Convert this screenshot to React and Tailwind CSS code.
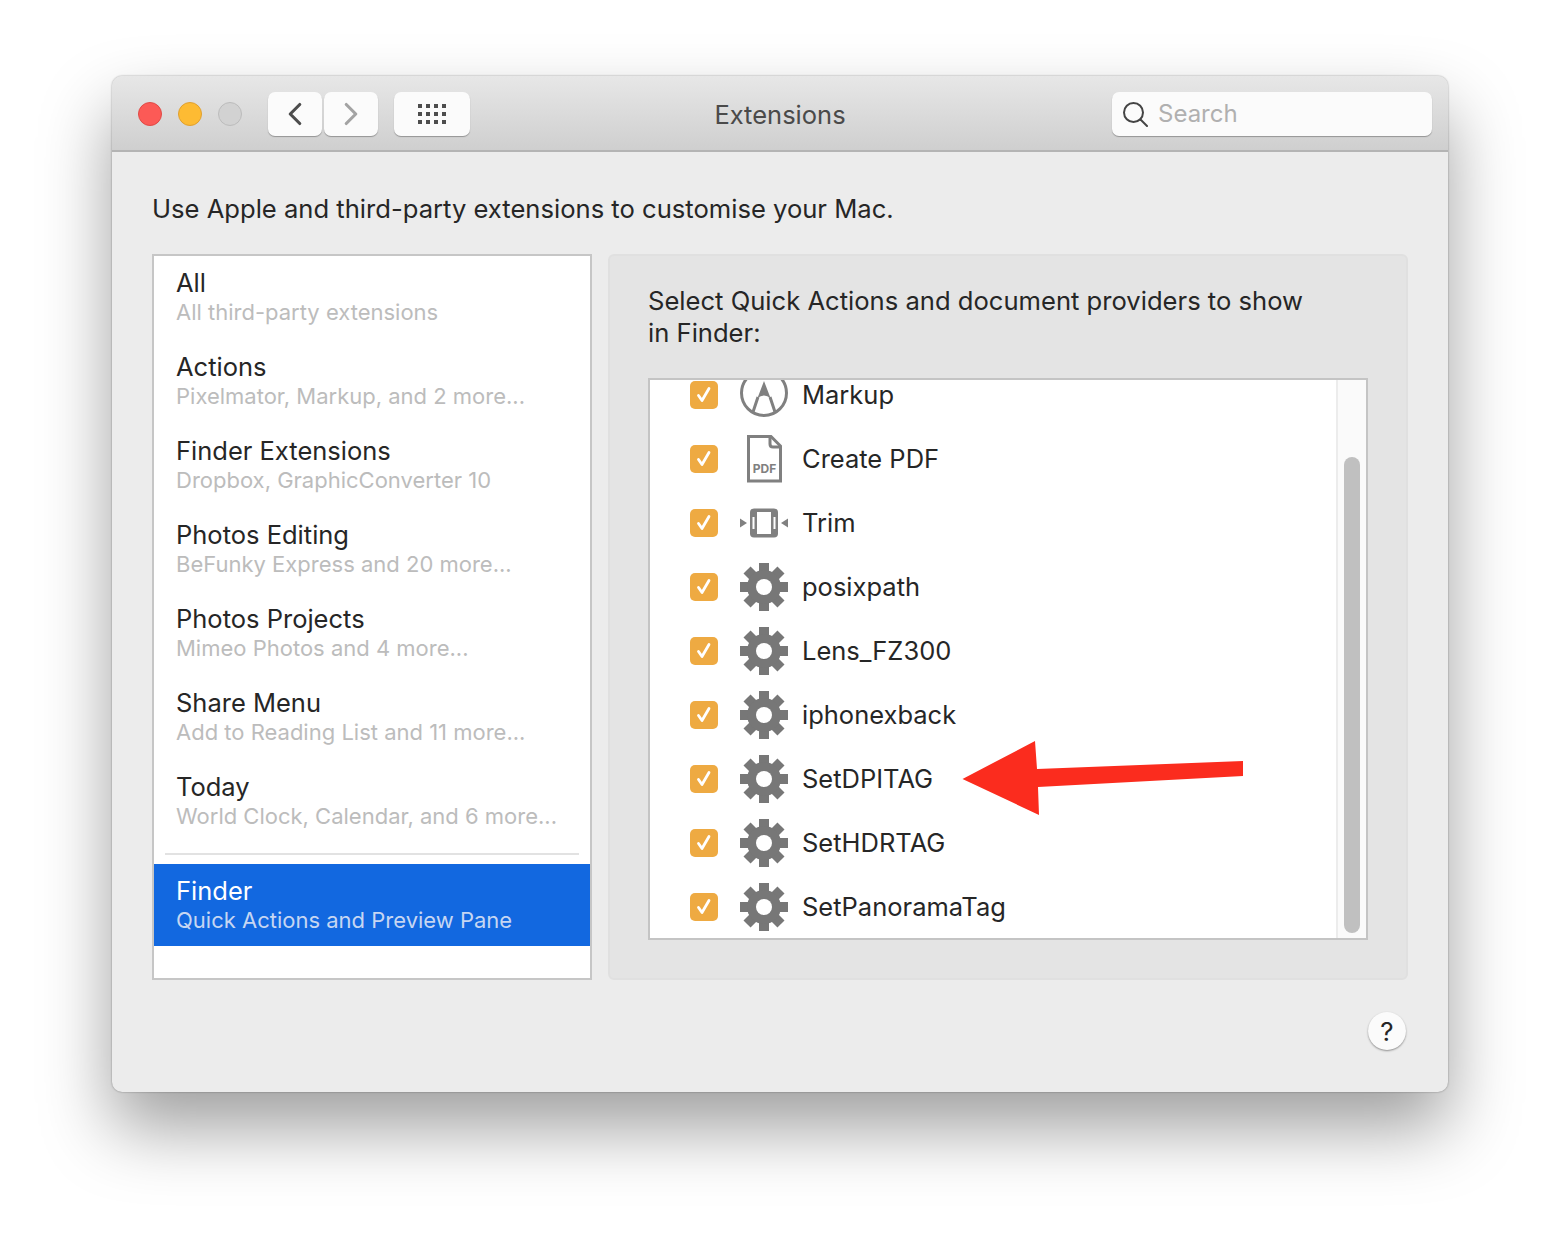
import { ChevronLeft, ChevronRight } from "lucide-react";

const categories = [
  { title: "All", sub: "All third-party extensions" },
  { title: "Actions", sub: "Pixelmator, Markup, and 2 more..." },
  { title: "Finder Extensions", sub: "Dropbox, GraphicConverter 10" },
  { title: "Photos Editing", sub: "BeFunky Express and 20 more..." },
  { title: "Photos Projects", sub: "Mimeo Photos and 4 more..." },
  { title: "Share Menu", sub: "Add to Reading List and 11 more..." },
  { title: "Today", sub: "World Clock, Calendar, and 6 more..." },
];

const actions = [
  { name: "Markup", icon: "markup" },
  { name: "Create PDF", icon: "pdf" },
  { name: "Trim", icon: "trim" },
  { name: "posixpath", icon: "gear" },
  { name: "Lens_FZ300", icon: "gear" },
  { name: "iphonexback", icon: "gear" },
  { name: "SetDPITAG", icon: "gear" },
  { name: "SetHDRTAG", icon: "gear" },
  { name: "SetPanoramaTag", icon: "gear" },
];

const GearIcon = () => (
  <svg width="48" height="48" viewBox="0 0 48 48" fill="#777777">
    {[0, 45, 90, 135].map((a) => (
      <rect key={a} x="19" y="0" width="10" height="48" transform={`rotate(${a} 24 24)`} />
    ))}
    <circle cx="24" cy="24" r="17" />
    <circle cx="24" cy="24" r="8" fill="#ffffff" />
  </svg>
);

const MarkupIcon = () => (
  <svg width="48" height="48" viewBox="0 0 48 48" fill="none" stroke="#808080">
    <circle cx="24" cy="22" r="22.5" strokeWidth="3" />
    <path d="M24 10 L17.5 27 Q24 22 30.5 27 Z" fill="#808080" stroke="none" />
    <path d="M18 26 L13 41 M30 26 L35 41" strokeWidth="3" />
  </svg>
);

const PdfIcon = () => (
  <svg width="48" height="48" viewBox="0 0 48 48" fill="none" stroke="#808080" strokeWidth="3">
    <path d="M8.5 1.5 H31 L40.5 11 V46 H8.5 Z" />
    <path d="M30 1.5 V9 Q30 12 33 12 H40.5" />
    <text x="24.5" y="37.5" textAnchor="middle" fill="#808080" stroke="none" fontSize="12" fontWeight="700" fontFamily="Inter, sans-serif">PDF</text>
  </svg>
);

const TrimIcon = () => (
  <svg width="48" height="48" viewBox="0 0 48 48" fill="#808080">
    <path d="M0 19.5 L7 24 L0 28.5 Z" />
    <path d="M48 19.5 L41 24 L48 28.5 Z" />
    <rect x="10" y="9.5" width="28" height="29" rx="4" />
    <rect x="17" y="13" width="14" height="22" fill="#ffffff" />
    <rect x="12.5" y="18" width="2" height="12" fill="#ffffff" />
    <rect x="33.5" y="18" width="2" height="12" fill="#ffffff" />
  </svg>
);

const icons = { gear: GearIcon, markup: MarkupIcon, pdf: PdfIcon, trim: TrimIcon };

const ActionRow = ({ name, icon }) => {
  const Icon = icons[icon];
  return (
    <div className="flex h-16 items-center pl-[40px]">
      <div className="mb-[1px] flex h-7 w-7 items-center justify-center rounded-[5px] bg-[#eeaa42]">
        <svg width="20" height="20" viewBox="0 0 20 20" fill="none" stroke="#ffffff" strokeWidth="2.8" strokeLinecap="round" strokeLinejoin="round">
          <path d="M4.5 10.5 L8 15.5 L15 3.5" />
        </svg>
      </div>
      <div className="mb-[1px] ml-[22px] h-12 w-12">
        <Icon />
      </div>
      <span className="ml-[14px] text-[25.5px] text-[#262626]">{name}</span>
    </div>
  );
};

const CategoryRow = ({ title, sub }) => (
  <div className="flex h-[84px] flex-col pl-[22px] pt-[11px]">
    <span className="text-[25.5px] leading-[32px] text-[#262626]">{title}</span>
    <span className="mt-[-2px] text-[22px] leading-[30px] text-[#bcbcbc]">{sub}</span>
  </div>
);

export default function App() {
  return (
    <div className="h-[1240px] bg-white pl-[112px] pt-[76px] font-['Inter',sans-serif]">
      <div className="relative h-[1016px] w-[1336px] overflow-visible rounded-[10px] bg-[#ececec] shadow-[0_36px_70px_rgba(0,0,0,0.38),0_0_2px_rgba(0,0,0,0.4)]">
        {/* title bar */}
        <div className="flex h-[76px] items-center rounded-t-[10px] border-b-2 border-[#b4b4b4] bg-gradient-to-b from-[#e7e7e7] to-[#cfcfcf] pl-[26px] pt-[2px]">
          <div className="h-6 w-6 rounded-full border border-[#e04a46] bg-[#fc5a56]" />
          <div className="ml-4 h-6 w-6 rounded-full border border-[#e0a030] bg-[#fdbb33]" />
          <div className="ml-4 h-6 w-6 rounded-full border border-[#bcbcbc] bg-[#d2d2d2]" />
          <div className="ml-[26px] flex h-[44px] w-[54px] items-center justify-center rounded-[7px] bg-[#fbfbfb] shadow-[0_1px_1px_rgba(0,0,0,0.3)]">
            <ChevronLeft size={38} strokeWidth={2} color="#4d4d4d" />
          </div>
          <div className="ml-[2px] flex h-[44px] w-[54px] items-center justify-center rounded-[7px] bg-[#fbfbfb] shadow-[0_1px_1px_rgba(0,0,0,0.3)]">
            <ChevronRight size={38} strokeWidth={2} color="#a3a3a3" />
          </div>
          <div className="ml-4 flex h-[44px] w-[76px] items-center justify-center rounded-[7px] bg-[#fbfbfb] shadow-[0_1px_1px_rgba(0,0,0,0.3)]">
            <div className="grid grid-cols-4 gap-[4px]">
              {Array.from({ length: 12 }).map((_, i) => (
                <div key={i} className="h-[4px] w-[4px] bg-[#4d4d4d]" />
              ))}
            </div>
          </div>
          <div className="flex-1 pr-[22px] pt-[2px] text-center text-[25.5px] text-[#4a4a4a]">Extensions</div>
          <div className="mr-4 flex h-[44px] w-[320px] items-center rounded-[7px] bg-[#fbfbfb] pl-[10px] shadow-[0_1px_1px_rgba(0,0,0,0.3)]">
            <svg width="26" height="26" viewBox="0 0 26 26" fill="none" stroke="#444444" strokeWidth="2" strokeLinecap="round">
              <circle cx="11.5" cy="11.5" r="9.5" />
              <path d="M18.5 18.5 L25 25" />
            </svg>
            <span className="ml-[10px] text-[24px] text-[#b0b0b0]">Search</span>
          </div>
        </div>

        {/* body */}
        <div className="px-[40px] pt-[40px]">
          <p className="text-[25.6px] leading-[34px] text-[#262626]">Use Apple and third-party extensions to customise your Mac.</p>
          <div className="mt-[28px] flex gap-[16px]">
            <div className="flex h-[726px] w-[440px] flex-col border-2 border-[#c6c6c6] bg-white">
              {categories.map((c) => (
                <CategoryRow key={c.title} title={c.title} sub={c.sub} />
              ))}
              <div className="mx-[11px] mt-[9px] h-[2px] shrink-0 bg-[#e2e2e2]" />
              <div className="mt-[9px] flex h-[82px] shrink-0 flex-col bg-[#1268e0] pl-[22px] pt-[11px]">
                <span className="text-[25.5px] leading-[32px] text-white">Finder</span>
                <span className="mt-[-2px] text-[22px] leading-[30px] text-[#c6d6f2]">Quick Actions and Preview Pane</span>
              </div>
            </div>
            <div className="h-[726px] w-[800px] rounded-[6px] border-2 border-[#e0e0e0] bg-[#e4e4e4] pl-[38px] pt-[29px]">
              <p className="text-[25.6px] leading-[32px] text-[#262626]">
                Select Quick Actions and document providers to show
                <br />
                in Finder:
              </p>
              <div className="mt-[29px] flex h-[562px] w-[720px] overflow-hidden border-2 border-[#c4c4c4] bg-white">
                <div className="flex-1">
                  <div className="mt-[-17px]">
                    {actions.map((a) => (
                      <ActionRow key={a.name} name={a.name} icon={a.icon} />
                    ))}
                  </div>
                </div>
                <div className="w-[30px] border-l-2 border-[#ececec] bg-[#fafafa] pl-[6px] pt-[77px]">
                  <div className="h-[476px] w-[16px] rounded-full bg-[#c0c0c0]" />
                </div>
              </div>
            </div>
          </div>
          <div className="mt-[32px] flex justify-end pr-[2px]">
            <div className="flex h-[38px] w-[38px] items-center justify-center rounded-full bg-[#fbfbfb] text-[26px] text-[#262626] shadow-[0_1px_2px_rgba(0,0,0,0.4)]">?</div>
          </div>
        </div>

        {/* annotation arrow */}
        <svg className="absolute left-[850px] top-[664px]" width="282" height="76" viewBox="0 0 282 76" fill="#fb2c1e">
          <path d="M0.5 39 L73 1 L75 29 L281 21 L281 36 L76 47 L77 75 Z" />
        </svg>
      </div>
    </div>
  );
}
